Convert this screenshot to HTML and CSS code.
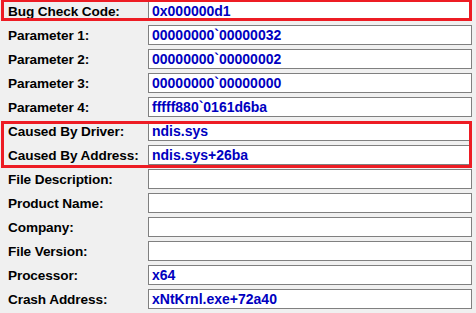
FILE: index.html
```html
<html>
<head>
<meta http-equiv="Content-Type" content="text/html; charset=utf-8" />
<title>Crash Details</title>
<link rel="stylesheet" href="styles.css">
</head>
<body>
<section id="details">
	<div class="group marked first">
		<div class="row"><label>Bug Check Code:</label><span class="field">0x000000d1</span></div>
	</div>
	<div class="row"><label>Parameter 1:</label><span class="field">00000000`00000032</span></div>
	<div class="row"><label>Parameter 2:</label><span class="field">00000000`00000002</span></div>
	<div class="row"><label>Parameter 3:</label><span class="field">00000000`00000000</span></div>
	<div class="row"><label>Parameter 4:</label><span class="field">fffff880`0161d6ba</span></div>
	<div class="group marked second">
		<div class="row"><label>Caused By Driver:</label><span class="field">ndis.sys</span></div>
		<div class="row"><label>Caused By Address:</label><span class="field">ndis.sys+26ba</span></div>
	</div>
	<div class="row"><label>File Description:</label><span class="field"></span></div>
	<div class="row"><label>Product Name:</label><span class="field"></span></div>
	<div class="row"><label>Company:</label><span class="field"></span></div>
	<div class="row"><label>File Version:</label><span class="field"></span></div>
	<div class="row"><label>Processor:</label><span class="field">x64</span></div>
	<div class="row"><label>Crash Address:</label><span class="field">xNtKrnl.exe+72a40</span></div>
</section>
</body>
</html>
```
FILE: styles.css
```css
html, body{
	margin:0;
	background:#f0f0f0;
	overflow:hidden;
}
body{
	font-family:"Liberation Sans", Arial, sans-serif;
}
#details{
	display:flex;
	flex-direction:column;
	gap:4px;
	padding:1px 4px 0 8px;
}
.group{
	display:flex;
	flex-direction:column;
	gap:4px;
	position:relative;
}
.row{
	display:flex;
	height:20px;
	align-items:center;
}
.row label{
	width:140px;
	font-size:13.6px;
	font-weight:bold;
	color:#000;
	letter-spacing:-0.1px;
}
.field{
	box-sizing:border-box;
	width:324px;
	height:20px;
	line-height:18px;
	padding:0 3px;
	border:1px solid #808080;
	background:#fff;
	color:#0000c0;
	font-size:14px;
	font-weight:bold;
	white-space:nowrap;
}
/* red marker frames drawn over the rows */
.marked::after{
	content:"";
	position:absolute;
	left:-7px;
	right:0;
	border:3px solid #ed1c24;
}
.first::after{
	top:-2px;
	bottom:0;
}
.second::after{
	top:0;
	bottom:-3px;
}
```
